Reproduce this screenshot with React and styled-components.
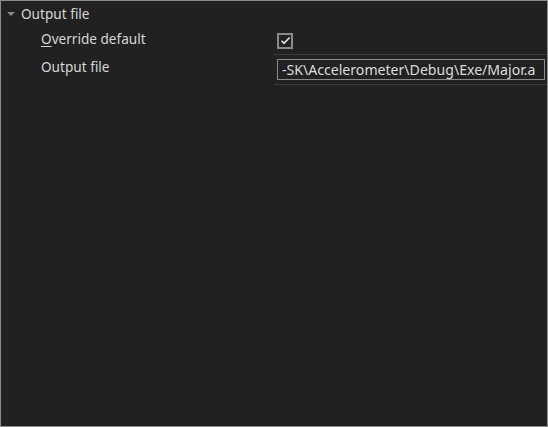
import React from 'react';
import styled, { createGlobalStyle } from 'styled-components';

const GlobalStyle = createGlobalStyle`
    html, body {
        margin: 0;
        padding: 0;
        background: #212121;
    }
    * {
        box-sizing: border-box;
    }
`;

const Panel = styled.div`
    width: 548px;
    height: 427px;
    background: #212121;
    border: 1px solid #8c8c8c;
    font-family: "Noto Sans", "Open Sans", sans-serif;
    font-size: 13.6px;
    color: #d6d6d6;
    overflow: hidden;
`;

const CategoryHeader = styled.div`
    height: 25px;
    display: flex;
    align-items: center;
    gap: 6px;
    padding-left: 6px;
`;

const Caret = styled.span`
    width: 0;
    height: 0;
    border-left: 4px solid transparent;
    border-right: 4px solid transparent;
    border-top: 4px solid #8a8a8a;
    margin-top: 1px;
`;

const PropertyRow = styled.div`
    display: grid;
    grid-template-columns: 273px 1fr;
    height: ${(p) => p.$height}px;
`;

const Label = styled.div`
    padding-left: 40px;
    padding-top: ${(p) => p.$top}px;
    line-height: 18px;
`;

const AccessKey = styled.span`
    text-decoration: underline;
    text-underline-offset: 2px;
`;

const ValueCell = styled.div`
    border-bottom: 1px solid #3b3b3b;
    display: flex;
    align-items: center;
    padding: 0 2px 0 3px;
`;

const CheckBox = styled.span`
    width: 16px;
    height: 16px;
    border: 2px solid #8a8a8a;
    display: flex;
    align-items: center;
    justify-content: center;
    margin-top: 1px;
`;

const TextBox = styled.div`
    flex: 1;
    height: 21px;
    border: 1px solid #8a8a8a;
    display: flex;
    align-items: center;
    padding-left: 4px;
    white-space: nowrap;
    overflow: hidden;
    font-size: 14.1px;
    color: #dcdcdc;
`;

const App = () => {
    return (
        <>
            <GlobalStyle />
            <Panel>
                <CategoryHeader>
                    <Caret />
                    <span>Output file</span>
                </CategoryHeader>
                <PropertyRow $height={29}>
                    <Label $top={4}>
                        <AccessKey>O</AccessKey>verride default
                    </Label>
                    <ValueCell>
                        <CheckBox>
                            <svg width="11" height="9" viewBox="0 0 11 9">
                                <path d="M1.5 4.8 L4 7.3 L9.6 1.5" fill="none" stroke="#e6e6e6" strokeWidth="1.6" />
                            </svg>
                        </CheckBox>
                    </ValueCell>
                </PropertyRow>
                <PropertyRow $height={30}>
                    <Label $top={3}>Output file</Label>
                    <ValueCell>
                        <TextBox>-SK\Accelerometer\Debug\Exe/Major.a</TextBox>
                    </ValueCell>
                </PropertyRow>
            </Panel>
        </>
    );
};

export default App;
